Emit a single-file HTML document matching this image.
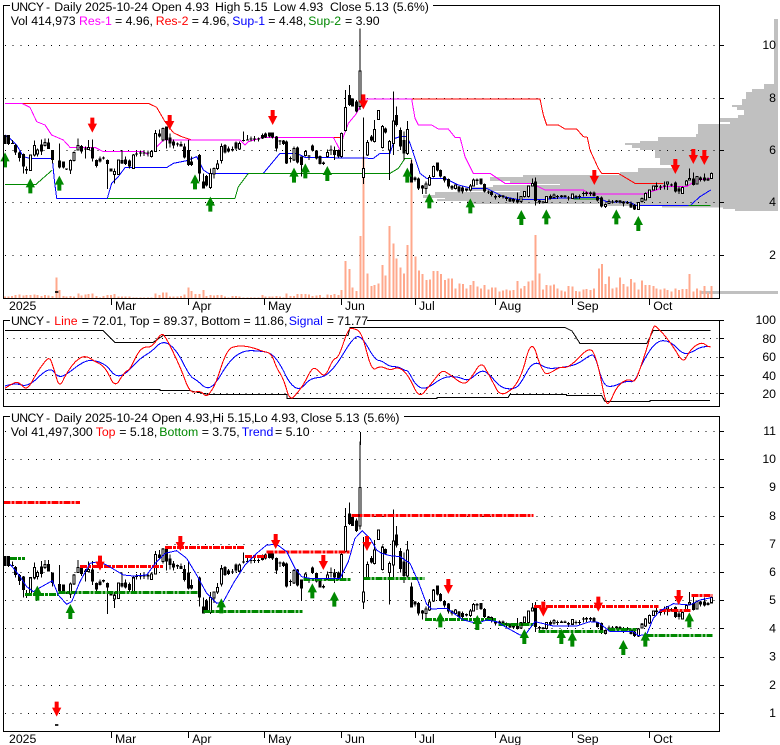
<!DOCTYPE html>
<html><head><meta charset="utf-8"><style>
html,body{margin:0;padding:0;background:#fff;width:780px;height:745px;overflow:hidden}
svg{display:block}
text{font-family:"Liberation Sans",Arial,sans-serif;font-size:12.3px;fill:#000}
.m{fill:#f0f}.r{fill:#f00}.b{fill:#00f}.g{fill:#080}.u{letter-spacing:-.6px}
</style></head><body>
<svg width="780" height="745" viewBox="0 0 780 745" xmlns="http://www.w3.org/2000/svg">
<defs>
<path id="dn" fill="#f00" d="M-6 0h12v18h8l-14 27-14-27h8z"/>
<path id="up" fill="#080" d="M0 0l14 27h-8v18h-12v-18h-8z"/>
<g id="candles" fill="none" stroke="#000" shape-rendering="crispEdges">
<g transform="scale(.33333)">
<path stroke-width="3" d="M15 405V432M25 405V435M38 420V432M47 432V465M58 455V485M70 460V520M80 500V522M91 465V512M103 422V470M113 445V470M124 418V465M135 415V440M146 415V447M157 450V490M178 430V505M190 484V505M200 505V510M211 478V522M222 455V485M234 415V450M245 435V460M257 440V475M266 420V450M277 418V485M289 478V503M300 470V487M311 470V478M322 478V567M333 505V515M344 505V550M355 478V525M366 450V492M377 470V495M388 478V505M400 462V505M410 455V470M421 452V470M432 452V468M444 452V470M455 450V472M467 390V455M478 388V412M489 382V425M499 380V445M510 400V442M521 418V445M532 428V440M543 425V440M553 430V475M565 420V498M575 470V498M599 462V545M610 520V565M620 525V560M631 505V567M642 503V535M653 480V510M664 430V490M675 432V460M686 440V458M697 440V455M708 425V450M719 425V450M731 395V425M742 405V422M753 410V425M764 408V424M775 412V424M787 400V417M797 398V414M808 397V412M818 397V415M829 408V455M840 420V435M851 420V435M859 422V492M871 470V488M882 440V483M893 440V490M905 470V530M916 450V470M927 465V480M938 434V455M949 450V478M960 466V493M971 484V495M982 448V472M993 437V465M1003 440V480M1016 448V472M1025 398V472M1036 270V395M1048 255V318M1058 295V320M1069 300V337M1080 85V330M1090 352V552M1102 420V468M1114 405V425M1124 360V428M1135 332V360M1147 375V445M1157 383V400M1168 420V540"/>
<path stroke-width="9" d="M15 405V432M25 405V432M38 429V432M47 435V458M58 458V474M70 462V500M80 507V511M124 433V455M146 427V447M157 450V480M178 482V502M190 484V503M200 506V509M245 438V455M257 445V449M277 442V475M289 480V498M300 475V485M311 472V476M322 480V492M333 505V515M366 480V490M377 478V492M388 482V500M410 460V463M421 458V461M432 458V461M444 458V461M478 400V410M499 380V420M510 412V430M521 425V437M532 430V433M543 432V440M553 440V472M565 450V495M575 485V495M599 465V520M610 545V565M620 528V557M675 435V458M686 445V455M697 447V451M708 428V445M731 420V423M742 418V421M753 416V419M764 415V418M775 415V418M787 405V415M797 400V412M808 397V410M818 397V412M829 410V445M840 422V425M851 422V432M859 425V490M871 474V477M893 442V487M905 470V495M927 467V470M938 436V452M949 452V475M960 468V492M971 488V492M993 449V452M1003 450V465M1016 450V470M1048 285V315M1058 295V320M1069 305V335M1114 410V422M1157 385V397"/>
<path stroke-width="3" fill="#fff" d="M88 465h6v47h-6zM100 437h6v28h-6zM110 450h6v12h-6zM132 428h6v8h-6zM208 482h6v28h-6zM219 458h6v24h-6zM231 437h6v13h-6zM263 442h6v6h-6zM341 514h6v10h-6zM352 480h6v43h-6zM397 465h6v40h-6zM452 455h6v15h-6zM464 400h6v55h-6zM486 385h6v35h-6zM628 520h6v42h-6zM639 505h6v17h-6zM650 492h6v13h-6zM661 440h6v42h-6zM716 430h6v17h-6zM879 445h6v35h-6zM913 455h6v12h-6zM979 458h6v12h-6zM1022 400h6v70h-6zM1033 322h6v70h-6zM1077 213h6v107h-6zM1087 505h6v28h-6zM1099 428h6v37h-6zM1121 388h6v37h-6zM1132 332h6v26h-6zM1144 380h6v62h-6zM1165 425h6v25h-6z"/>
</g>
<g transform="translate(390 0) scale(.33333)">
<path stroke-width="3" d="M10 275V465M20 320V380M31 382V450M42 395V480M52 363V465M64 478V548M75 530V545M85 533V570M97 555V582M108 545V582M119 525V558M130 497V533M142 487V515M152 508V532M164 528V548M175 535V565M186 555V570M196 553V568M207 558V578M218 560V580M229 565V574M241 552V575M250 535V560M261 535V555M273 535V555M284 550V578M295 572V582M305 573V590M317 583V598M328 584V594M339 585V595M349 590V603M360 593V606M371 595V606M382 577V610M393 588V608M404 573V592M416 556V592M427 535V560M437 533V617M448 600V612M459 603V610M470 588V609M481 584V598M492 580V595M503 585V597M514 585V592M525 585V592M536 588V602M547 580V597M558 585V595M569 583V597M580 575V590M590 575V588M601 575V588M612 575V590M623 588V604M634 590V622M646 610V624M657 598V612M668 600V610M679 600V609M690 600V610M701 603V620M712 603V612M723 605V624M734 612V630M745 606V630M756 592V607M766 578V602M778 568V594M790 556V572M800 548V570M812 555V570M823 545V568M832 544V570M845 550V560M856 545V577M867 560V582M878 560V582M889 540V557M898 505V542M910 517V557M921 528V554M932 530V545M943 520V545M954 533V543M964 518V537"/>
<path stroke-width="9" d="M20 345V375M31 390V440M42 420V460M64 490V548M75 532V540M85 535V565M97 557V565M142 487V512M152 510V530M164 530V542M175 537V560M186 558V565M207 560V575M218 563V575M229 566V571M261 539V543M273 535V552M284 552V575M295 574V577M305 575V585M317 588V593M328 587V591M339 587V591M349 592V597M360 595V604M371 597V604M382 600V608M437 545V603M448 602V607M459 604V608M481 588V595M503 588V591M514 587V591M525 587V591M536 592V596M558 588V592M569 588V591M580 579V582M590 578V582M601 578V582M612 577V588M623 590V602M634 592V620M668 604V607M679 601V606M690 602V608M701 605V610M712 606V610M723 610V622M734 615V628M800 557V561M812 559V563M823 557V560M845 553V557M856 547V575M867 565V575M910 535V555M932 532V540M943 532V542M954 536V541"/>
<path stroke-width="3" fill="#fff" d="M7 363h6v67h-6zM49 388h6v72h-6zM105 552h6v13h-6zM116 533h6v22h-6zM127 500h6v30h-6zM193 555h6v10h-6zM238 558h6v12h-6zM247 540h6v18h-6zM390 590h6v15h-6zM401 575h6v15h-6zM413 558h6v32h-6zM424 550h6v8h-6zM467 590h6v17h-6zM489 585h6v7h-6zM544 582h6v13h-6zM643 613h6v7h-6zM654 605h6v5h-6zM742 608h6v20h-6zM753 595h6v10h-6zM763 580h6v20h-6zM775 570h6v22h-6zM787 558h6v12h-6zM829 546h6v6h-6zM875 562h6v18h-6zM886 543h6v12h-6zM895 535h6v5h-6zM918 530h6v22h-6zM961 520h6v15h-6z"/>
</g>
</g>
</defs>

<rect width="780" height="745" fill="#fff"/>

<!-- volume profile -->
<path fill="#c0c0c0" shape-rendering="crispEdges" d="M774 19H778V211H735V209H723V207.5H662V206H600V204H467V201H437V199H445V198H423V195H435V192H520V191H465V187H493V185H560V184H510V181H490V177H523V175H620V172H638V168H672V165H660V158H655V150H640V148H632V145H625V143H640V141H658V137H696V134H698V124H730V122H719V118H738V115H744V110H737V107H732V105H742V99H746V92H752V89H764V84H774Z"/>
<rect x="700" y="291" width="78" height="3" fill="#c0c0c0"/>

<!-- grids -->
<g stroke="#000" stroke-dasharray="1 6.7" shape-rendering="crispEdges" fill="none">
<path d="M5 45.5H719M5 98.5H719M5 150.5H719M5 202.5H719M5 255.5H719"/>
<path d="M7 338.5H719M7 357.5H719M7 375.5H719M7 393.5H719" stroke-dasharray="1 5.45"/>
<path d="M5 431.5H719M5 459.5H719M5 487.5H719M5 516.5H719M5 544.5H719M5 572.5H719M5 600.5H719M5 628.5H719M5 657.5H719M5 685.5H719M5 713.5H719"/>
</g>

<!-- volume bars -->
<g fill="none" stroke="#ffa88c" stroke-width="6" shape-rendering="crispEdges">
<path transform="scale(.33333)" d="M15 894V890M25 894V890M36 894V888M47 894V885M58 894V883M70 894V887M80 894V885M91 894V885M103 894V883M113 894V885M124 894V888M135 894V885M146 894V887M157 894V888M170 894V833M178 894V870M190 894V888M200 894V890M211 894V888M222 894V890M236 894V880M245 894V887M257 894V883M266 894V882M277 894V880M289 894V888M300 894V892M311 894V888M322 894V885M333 894V885M344 894V882M355 894V890M366 894V890M377 894V890M388 894V890M400 894V892M410 894V892M421 894V892M432 894V892M444 894V892M455 894V892M467 894V880M478 894V885M489 894V877M499 894V877M510 894V890M521 894V890M532 894V890M543 894V888M553 894V883M565 894V862M575 894V873M587 894V882M599 894V882M610 894V870M620 894V888M631 894V885M642 894V887M653 894V885M664 894V885M675 894V890M686 894V892M697 894V888M708 894V888M719 894V890M731 894V892M742 894V892M753 894V892M764 894V892M775 894V892M787 894V885M797 894V890M808 894V890M818 894V890M829 894V888M840 894V890M851 894V892M859 894V880M871 894V888M882 894V888M893 894V882M905 894V882M916 894V882M927 894V884M938 894V888M949 894V886M960 894V885M971 894V892M982 894V883M993 894V885M1003 894V882M1016 894V885M1025 894V870M1036 894V783M1048 894V807M1058 894V862M1069 894V873M1082 894V708M1091 894V470M1103 894V820M1114 894V858M1124 894V855M1136 894V850M1147 894V795M1157 894V827M1168 894V678"/>
<path transform="translate(390 0) scale(.33333)" d="M10 894V730M20 894V775M31 894V803M42 894V820M52 894V735M64 894V480M76 894V770M87 894V812M98 894V822M110 894V840M120 894V838M131 894V813M142 894V813M153 894V822M165 894V840M176 894V835M186 894V835M197 894V865M208 894V850M219 894V852M230 894V865M241 894V855M250 894V843M262 894V860M273 894V865M284 894V855M295 894V868M306 894V862M317 894V862M328 894V875M339 894V872M349 894V868M360 894V872M371 894V870M382 894V843M393 894V865M404 894V858M416 894V845M427 894V842M437 894V705M448 894V820M459 894V868M470 894V855M481 894V857M492 894V853M503 894V865M514 894V872M525 894V875M536 894V858M547 894V860M558 894V873M569 894V875M580 894V868M590 894V867M601 894V870M612 894V865M627 894V805M636 894V792M646 894V852M657 894V830M668 894V865M679 894V862M690 894V832M701 894V852M712 894V860M723 894V837M734 894V848M745 894V868M756 894V842M766 894V855M778 894V855M790 894V858M800 894V865M812 894V868M823 894V865M832 894V870M845 894V875M856 894V865M867 894V870M878 894V867M889 894V867M898 894V822M910 894V875M921 894V865M932 894V872M943 894V858M954 894V878M964 894V858"/>
</g>

<!-- panel 1 indicator lines -->
<g transform="scale(.33333)" fill="none" stroke-width="3" stroke-linejoin="round" shape-rendering="crispEdges">
<path stroke="#f00" d="M15 310H445L470 322 495 365 520 398 545 410 575 420M668 420H720M830 412H1020M1090 297H1620L1630 345 1640 375H1675L1695 387H1730L1750 410 1762 412 1770 450 1795 505 1805 520H1855L1905 550H1990"/>
<path stroke="#00f" d="M15 405L30 415 50 435 70 470 90 475H157L163 540 170 595H322L335 550 355 530 375 503H500L520 490 560 482 590 470 610 510 625 520H790L815 490 840 460H890L915 472 1120 475 1140 460H1170L1185 415 1200 410H1220L1230 430 1260 520 1280 535H1335L1375 555 1415 565H1460L1510 590 1550 598H1640L1660 595 1790 592 1820 605 1890 607 1910 617H2070L2100 590 2132 570"/>
<path stroke="#080" d="M15 553H108L157 510M322 595H705L715 560 745 520H1170L1195 505 1215 475H1235M1720 597H1790M2065 617H2132"/>
<path stroke="#f0f" d="M15 310H65L90 322 110 365 135 375 155 405 190 420 210 442H285L310 455H430L445 465M470 440L490 420H720L735 435 745 425 790 412H1000L1020 450 1030 410 1045 370 1070 340 1090 297H1235L1245 355 1255 375H1295L1315 387H1345L1365 412H1380L1395 470 1420 520H1470L1515 550H1595L1615 560 1635 570H1750L1770 582H1930L1970 570 1990 560H2060L2090 540 2135 535"/>
</g>
<use href="#candles"/>
<g transform="scale(.33333)">
<path stroke="#000" stroke-width="5" d="M165 876h10"/>
<use href="#dn" x="277" y="353"/><use href="#dn" x="509" y="345"/><use href="#dn" x="818" y="330"/><use href="#dn" x="1090" y="283"/>
<use href="#dn" x="1783" y="510"/><use href="#dn" x="2026" y="477"/><use href="#dn" x="2080" y="447"/><use href="#dn" x="2113" y="450"/>
<use href="#up" x="15" y="457"/><use href="#up" x="91" y="535"/><use href="#up" x="178" y="527"/><use href="#up" x="585" y="523"/><use href="#up" x="631" y="590"/><use href="#up" x="882" y="503"/><use href="#up" x="916" y="490"/><use href="#up" x="982" y="498"/>
<use href="#up" x="1222" y="503"/><use href="#up" x="1288" y="580"/><use href="#up" x="1411" y="595"/><use href="#up" x="1564" y="630"/><use href="#up" x="1639" y="628"/><use href="#up" x="1849" y="628"/><use href="#up" x="1915" y="648"/>
</g>

<!-- panel 2 lines -->
<g fill="none" stroke="#000" stroke-width="1" shape-rendering="crispEdges">
<path d="M5 330.5H103L115 342.5H153L163 335.5H348L350 327.5H565L572 331 580 343.5H646.7L653.3 330.5H710.7"/>
<path d="M5 389.5H160V390.5H190L193 391.5 210 394.5H287V398.5H437V397.5H508L510 394.5H566.7V395.5H601.7L605 401.5H650V400.5H710"/>
</g>
<g transform="translate(0 300) scale(.33333)" fill="none" stroke-width="3.2" stroke-linejoin="round" shape-rendering="crispEdges">
<path stroke="#00f" d="M15 258Q45 248 65 255Q85 262 117 230Q150 198 162 216Q175 235 190 227Q205 220 227 202Q250 185 265 182Q280 180 300 187Q320 195 332 212Q345 230 360 227Q375 225 397 200Q420 175 437 165Q455 155 472 137Q490 120 510 135Q530 150 550 190Q570 230 580 235Q590 240 605 254Q620 268 632 261Q645 255 667 217Q690 180 710 166Q730 152 750 152Q770 152 792 155Q815 158 830 179Q845 200 857 226Q870 252 885 262Q900 272 915 253Q930 235 952 233Q975 232 992 213Q1010 195 1035 153Q1060 112 1072 110Q1085 108 1105 144Q1125 180 1135 181Q1145 182 1157 191Q1170 200 1182 200Q1195 200 1205 206Q1215 212 1220 212Q1225 212 1237 236Q1250 260 1265 264Q1280 268 1305 249Q1330 230 1352 230Q1375 230 1390 237Q1405 245 1425 226Q1445 208 1457 216Q1470 225 1487 245Q1505 265 1522 266Q1540 268 1550 261Q1560 255 1580 217Q1600 180 1620 193Q1640 207 1660 205Q1680 203 1705 199Q1730 195 1750 180Q1770 165 1777 165Q1785 165 1797 210Q1810 255 1822 258Q1835 262 1857 252Q1880 242 1892 245Q1905 248 1917 214Q1930 180 1950 151Q1970 122 1990 122Q2010 122 2030 143Q2050 165 2065 160Q2080 155 2092 147Q2105 140 2118 140L2132 140"/>
<path stroke="#f00" d="M15 265Q45 245 52 247Q60 250 71 261Q82 272 98 241Q115 210 131 190Q148 165 154 185Q160 200 169 232Q178 270 191 237Q205 210 220 192Q235 175 247 171Q260 168 272 176Q285 185 300 192Q315 200 330 231Q345 268 360 238Q375 215 382 212Q390 210 402 182Q415 155 425 147Q435 140 445 141Q455 142 470 121Q485 95 492 107Q500 115 522 162Q545 210 557 245Q570 280 585 276Q600 272 610 281Q620 295 632 275Q645 260 662 205Q680 150 695 143Q710 137 730 138Q750 140 770 147Q790 155 802 157Q815 160 822 182Q830 205 840 220Q850 235 860 269Q870 310 887 284Q905 265 920 235Q935 205 942 205Q950 205 962 220Q975 235 987 205Q1000 175 1007 175Q1015 175 1030 130Q1045 85 1052 85Q1060 85 1072 90Q1085 95 1100 155Q1115 215 1127 206Q1140 197 1155 204Q1170 212 1182 206Q1195 200 1210 212Q1225 225 1241 260Q1258 300 1276 272Q1295 250 1310 230Q1325 210 1335 215Q1345 220 1367 237Q1390 255 1400 247Q1410 240 1427 212Q1445 180 1457 207Q1470 230 1485 259Q1500 295 1527 273Q1555 258 1575 189Q1595 100 1612 171Q1630 222 1640 221Q1650 220 1665 210Q1680 200 1692 202Q1705 205 1737 173Q1770 135 1780 158Q1790 175 1804 243Q1818 318 1824 310Q1830 308 1840 284Q1850 260 1867 247Q1885 235 1895 242Q1905 250 1917 215Q1930 180 1945 130Q1960 75 1965 78Q1970 80 1990 102Q2010 125 2030 157Q2050 195 2060 170Q2070 150 2087 137Q2105 125 2115 133Q2125 142 2132 140"/>
</g>

<!-- panel 3 -->
<use href="#candles" transform="translate(0 411.2) scale(1 1.0743)"/>
<path stroke="#000" fill="none" shape-rendering="crispEdges" d="M360.5 432V445"/>
<g transform="translate(0 405) scale(.33333)" fill="none">
<g stroke-width="9" stroke-dasharray="21 3 9 3" shape-rendering="crispEdges">
<path stroke="#f00" d="M10 292H240M240 484H492M495 427H735M735 454H800M800 441H1055M1055 331H1600M1602 604H1975M1978 617H2075M2075 571H2138"/>
<path stroke="#080" d="M30 460H75M75 568H175M175 562H595M610 619H908M910 523H1055M1090 520H1273M1275 643H1490M1495 658H1600M1615 679H1810M1825 673H1910M1940 691H2138"/>
</g>
<path stroke="#00f" stroke-width="3" stroke-linejoin="round" shape-rendering="crispEdges" d="M30 478L45 495 60 515 80 545 100 560 120 548 157 527 175 570 200 598 215 590 240 530 270 475 295 470 320 480 345 495 370 510 400 513 440 510 470 470 495 445 530 437 560 460 590 510 620 565 650 595 670 590 700 535 735 480 770 445 800 420 830 418 860 440 885 490 905 515 930 520H1020L1045 470 1065 400 1087 377 1110 400 1130 435 1145 445 1170 452 1200 455 1230 475 1255 530 1280 598 1295 612 1340 610 1390 645 1430 655 1460 645 1490 650 1515 665 1560 690 1575 690 1605 650 1660 663H1730L1770 650 1795 652 1830 680H1900L1915 692 1940 688 1960 640 1980 618 2020 596 2070 600 2100 585 2135 578"/>
<path stroke="#000" stroke-width="5" d="M165 960h10"/>
<use href="#dn" x="300" y="452"/><use href="#dn" x="541" y="393"/><use href="#dn" x="827" y="387"/><use href="#dn" x="970" y="450"/><use href="#dn" x="1101" y="393"/><use href="#dn" x="170" y="890"/>
<use href="#dn" x="1345" y="522"/><use href="#dn" x="1630" y="590"/><use href="#dn" x="1795" y="575"/><use href="#dn" x="2036" y="555"/>
<use href="#up" x="112" y="542"/><use href="#up" x="211" y="597"/><use href="#up" x="664" y="580"/><use href="#up" x="937" y="535"/><use href="#up" x="1003" y="560"/>
<use href="#up" x="1321" y="622"/><use href="#up" x="1432" y="630"/><use href="#up" x="1573" y="672"/><use href="#up" x="1684" y="672"/><use href="#up" x="1717" y="680"/><use href="#up" x="1870" y="705"/><use href="#up" x="1936" y="680"/><use href="#up" x="2068" y="622"/>
</g>

<!-- frames and ticks -->
<g fill="none" stroke="#000" shape-rendering="crispEdges">
<rect x="3.5" y="5.5" width="716" height="293"/>
<rect x="3.5" y="320.5" width="716" height="86"/>
<rect x="3.5" y="416.5" width="716" height="315"/>
<path d="M720 45.5h4M720 98.5h4M720 150.5h4M720 202.5h4M720 255.5h4M720 320.5h4M720 338.5h4M720 357.5h4M720 375.5h4M720 393.5h4M720 431.5h4M720 459.5h4M720 487.5h4M720 516.5h4M720 544.5h4M720 572.5h4M720 600.5h4M720 628.5h4M720 657.5h4M720 685.5h4M720 713.5h4"/>
<path d="M111.5 299v6M188.5 299v6M264.5 299v6M341.5 299v6M415.5 299v6M495.5 299v6M572.5 299v6M649.5 299v6M111.5 732v6M188.5 732v6M264.5 732v6M341.5 732v6M415.5 732v6M495.5 732v6M572.5 732v6M649.5 732v6"/>
</g>

<!-- text backgrounds -->
<rect x="10" y="0" width="423" height="12" fill="#fff"/>
<rect x="10" y="315" width="357" height="11" fill="#fff"/>
<rect x="10" y="411" width="394" height="13" fill="#fff"/>
<rect x="10" y="425" width="301" height="13" fill="#fff"/>

<!-- text -->
<text y="11"><tspan x="11" class="u">UNCY -</tspan><tspan x="54.3">Daily</tspan><tspan x="85">2025-10-24</tspan><tspan x="151.7">Open 4.93</tspan><tspan x="215">High 5.15</tspan><tspan x="273.3">Low 4.93</tspan><tspan x="330">Close 5.13</tspan><tspan x="392.7">(5.6%)</tspan></text>
<text y="25"><tspan x="10.7">Vol 414,973</tspan><tspan x="79" class="m">Res-1</tspan><tspan x="115">= 4.96,</tspan><tspan x="155.7" class="r">Res-2</tspan><tspan x="191.7">= 4.96,</tspan><tspan x="232.3" class="b">Sup-1</tspan><tspan x="268.3">= 4.48,</tspan><tspan x="308.3" class="g">Sup-2</tspan><tspan x="345">= 3.90</tspan></text>
<text y="325"><tspan x="11" class="u">UNCY -</tspan><tspan x="54.3" class="r">Line</tspan><tspan x="81.7">= 72.01, Top = 89.37, Bottom = 11.86,</tspan><tspan x="288.7" class="b">Signal</tspan><tspan x="326.7">= 71.77</tspan></text>
<text y="422"><tspan x="11" class="u">UNCY -</tspan><tspan x="54.3">Daily</tspan><tspan x="85">2025-10-24</tspan><tspan x="151.7">Open 4.93,</tspan><tspan x="212.3">Hi 5.15,</tspan><tspan x="254">Lo 4.93,</tspan><tspan x="300.7">Close 5.13</tspan><tspan x="363.3">(5.6%)</tspan></text>
<text y="436"><tspan x="10.7">Vol 41,497,300</tspan><tspan x="95.7" class="r">Top</tspan><tspan x="119.3">= 5.18,</tspan><tspan x="159.3" class="g">Bottom</tspan><tspan x="201.7">= 3.75,</tspan><tspan x="241.7" class="b">Trend</tspan><tspan x="275">= 5.10</tspan></text>

<text y="310"><tspan x="9">2025</tspan><tspan x="115">Mar</tspan><tspan x="192.3">Apr</tspan><tspan x="268">May</tspan><tspan x="345">Jun</tspan><tspan x="419">Jul</tspan><tspan x="499.3">Aug</tspan><tspan x="576.7">Sep</tspan><tspan x="653.3">Oct</tspan></text>
<text y="743"><tspan x="9">2025</tspan><tspan x="115">Mar</tspan><tspan x="192.3">Apr</tspan><tspan x="268">May</tspan><tspan x="345">Jun</tspan><tspan x="419">Jul</tspan><tspan x="499.3">Aug</tspan><tspan x="576.7">Sep</tspan><tspan x="653.3">Oct</tspan></text>

<g text-anchor="end">
<text x="776" y="49">10</text><text x="776" y="102">8</text><text x="776" y="154">6</text><text x="776" y="206">4</text><text x="776" y="259">2</text>
<text x="776" y="324">100</text><text x="776" y="343">80</text><text x="776" y="361">60</text><text x="776" y="380">40</text><text x="776" y="398">20</text>
<text x="776" y="435">11</text><text x="776" y="463">10</text><text x="776" y="491">9</text><text x="776" y="520">8</text><text x="776" y="548">7</text><text x="776" y="576">6</text><text x="776" y="604">5</text><text x="776" y="632.5">4</text><text x="776" y="660.5">3</text><text x="776" y="689">2</text><text x="776" y="717">1</text>
</g>
</svg>
</body></html>
